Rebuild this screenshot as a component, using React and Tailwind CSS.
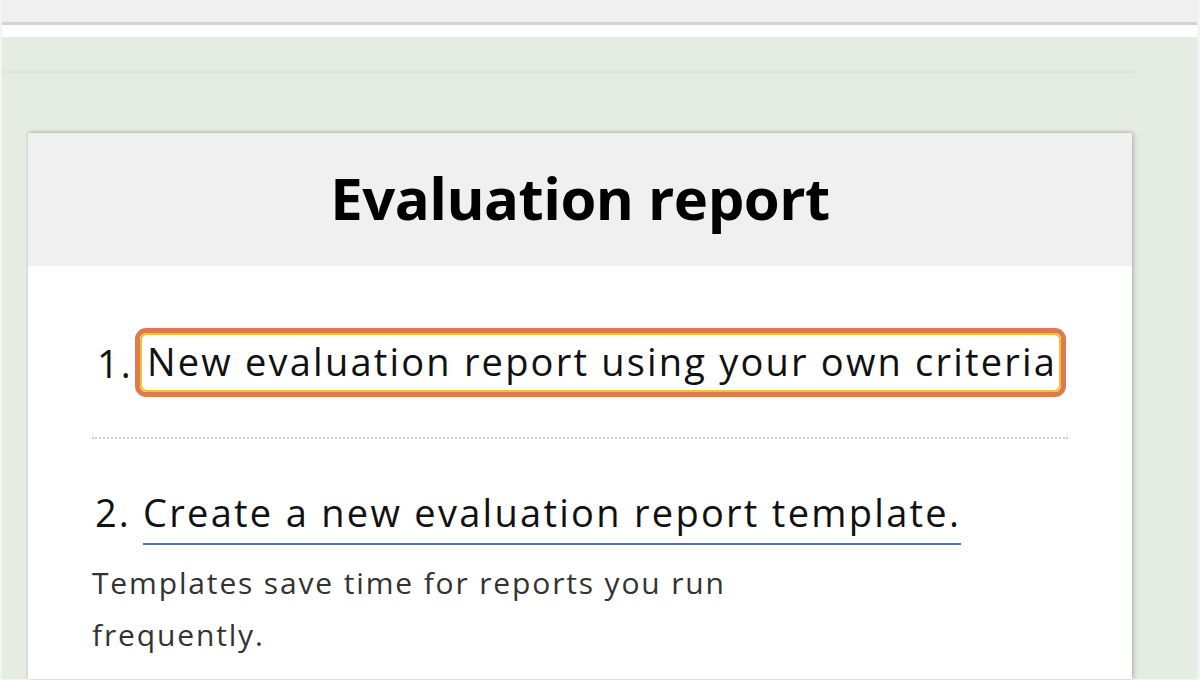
export default function App() {
  const f = { fontFamily: '"Open Sans", "Noto Sans", sans-serif' };
  return (
    <div className="w-[1200px] h-[680px] bg-[#f4f4f8] overflow-hidden pl-[2px] pr-[3px] pb-[1px] flex flex-col" style={f}>
      <div className="h-[22px] bg-[#f0f0f0] shrink-0" />
      <div className="h-[3px] bg-[#d3d3d3] shrink-0" />
      <div className="h-[12px] bg-white shrink-0" />
      <div className="flex-1 bg-[#e5ede2] flex flex-col min-h-0">
        <div className="h-[33px] shrink-0" />
        <div className="h-[2px] w-[1133px] bg-[#dfe6dc] shadow-[0_1px_3px_rgba(0,0,0,0.06)] shrink-0" />
        <div className="h-[61px] shrink-0" />
        <div className="ml-[26px] w-[1104px] flex-1 bg-white shadow-[2px_0_5px_rgba(0,0,0,0.18),0_-1px_3px_rgba(0,0,0,0.12)] flex flex-col">
          <div className="h-[133px] bg-[#f0f0f0] flex items-center justify-center shrink-0">
            <h1 className="text-[58px] font-bold text-black tracking-[-0.5px] leading-none -mt-[3px]">Evaluation report</h1>
          </div>
          <div className="px-[64px] text-[#111]">
            <div className="flex items-center mt-[62px] h-[69px]">
              <span className="text-[38px] w-[43px] pl-[5px] leading-none tracking-[2px]">1.</span>
              <div className="h-[69px] rounded-[11px] border-[5px] border-[#e07a4e] flex">
                <div className="flex-1 rounded-[7px] border-[2px] border-[#f2c230] flex items-center pl-[5px] pr-[2px]">
                  <span className="text-[38px] leading-none whitespace-nowrap tracking-[2.2px] -mt-[3px]">New evaluation report using your own criteria</span>
                </div>
              </div>
            </div>
            <div className="mt-[40px] border-t-2 border-dotted border-[#cfcfcf] w-[976px]" />
            <div className="flex items-start mt-[54px]">
              <span className="text-[38px] w-[51px] pl-[3px] leading-none tracking-[2px]">2.</span>
              <span className="text-[38px] leading-none whitespace-nowrap tracking-[2.28px] border-b-2 border-[#5674b0] pb-[12px]">Create a new evaluation report template.</span>
            </div>
            <p className="mt-[12px] text-[30px] leading-[52px] text-[#333] w-[680px] tracking-[1.85px]">Templates save time for reports you run frequently.</p>
          </div>
        </div>
      </div>
    </div>
  );
}
